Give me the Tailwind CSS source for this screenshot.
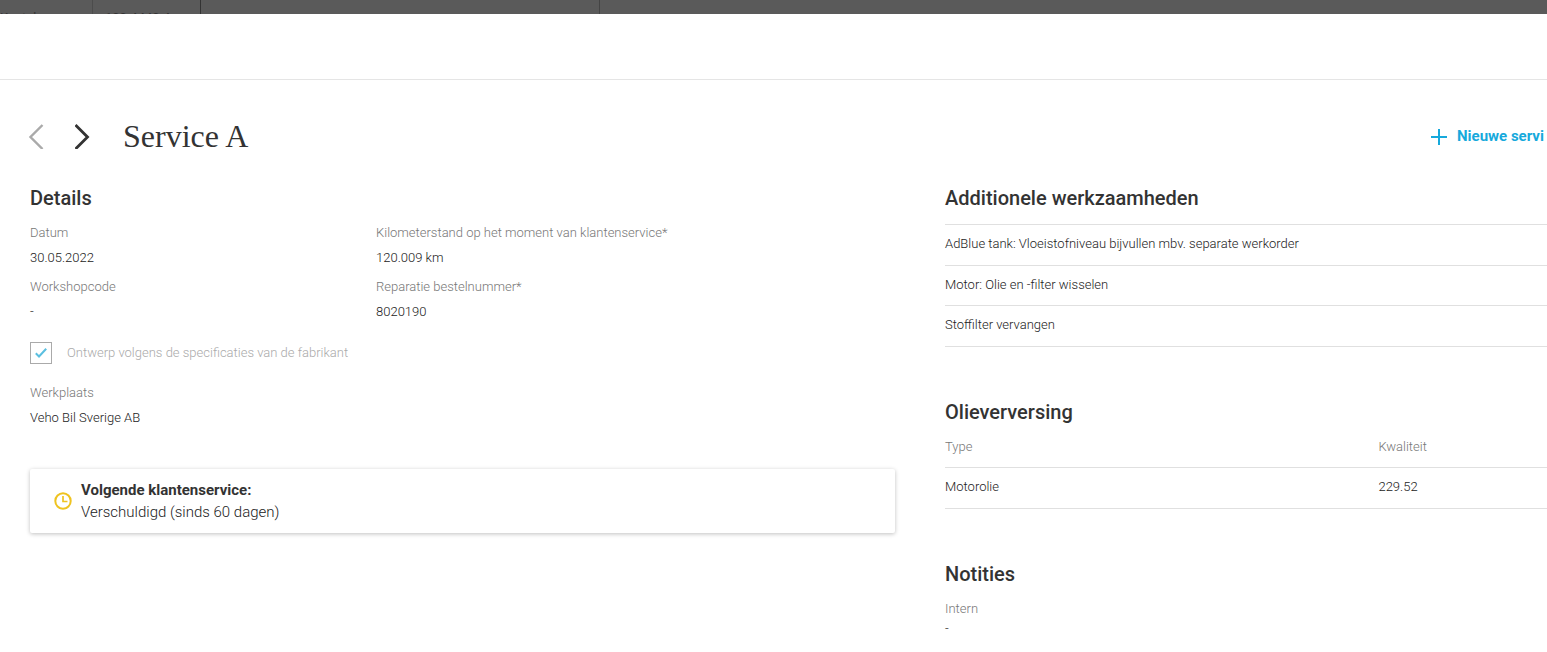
<!DOCTYPE html>
<html lang="nl">
<head>
  <meta charset="UTF-8" />
  <meta name="viewport" content="width=device-width, initial-scale=1.0" />
  <title>Service A</title>
  <script src="https://cdn.jsdelivr.net/npm/@tailwindcss/browser@4"></script>
</head>
<body class="bg-white min-h-screen overflow-x-hidden font-['Roboto',sans-serif] font-light text-[13px] leading-[25px] text-[#222]">
  <!-- Dimmed page behind the dialog -->
  <div class="h-[14px] overflow-hidden flex bg-[#5a5a5a] font-normal text-[#333] leading-5" aria-hidden="true">
    <div class="w-[93px] shrink-0 pt-2 border-r border-[#4c4c4c]">Kenteken</div>
    <div class="w-[108px] shrink-0 pt-2 pl-3 border-r border-[#333]">100.4440.4</div>
    <div class="w-[399px] shrink-0 border-r border-[#444]"></div>
  </div>

  <header class="h-[66px] border-b border-[#e5e5e5]"></header>

  <main class="pl-[30px] pt-8">
    <!-- Title row -->
    <div class="h-12 flex items-center justify-between">
      <div class="flex items-center">
        <button type="button" disabled aria-label="Vorige" class="w-[45px]">
          <svg class="w-4 h-[26px] -ml-0.5" viewBox="0 0 16 26" fill="none" stroke="#aaa" stroke-width="2.4"><path d="M14.5 2 2.5 14l12 12" /></svg>
        </button>
        <button type="button" aria-label="Volgende" class="w-12">
          <svg class="w-4 h-[26px]" viewBox="0 0 16 26" fill="none" stroke="#333" stroke-width="2.8"><path d="M.5 2l12 12-12 12" /></svg>
        </button>
        <h1 class="font-['Liberation_Serif',serif] font-normal text-[32px] leading-10 text-[#333]">Service A</h1>
      </div>
      <button type="button" class="w-[116px] flex items-center gap-[10px] overflow-hidden whitespace-nowrap font-bold text-[15px] text-[#16a9dc]">
        <svg class="w-4 h-[18px] shrink-0" viewBox="0 0 16 18" fill="none" stroke="currentColor" stroke-width="2"><path d="M8 2v16M0 10h16" /></svg>
        Nieuwe servi
      </button>
    </div>

    <div class="mt-6 grid grid-cols-[865fr_602fr] gap-x-[50px]">
      <!-- Left column -->
      <section>
        <h2 class="mb-2 text-xl leading-7 font-medium text-[#333]">Details</h2>
        <dl class="grid grid-cols-[2fr_3fr] gap-y-1">
          <div>
            <dt class="text-[#777]">Datum</dt>
            <dd>30.05.2022</dd>
          </div>
          <div>
            <dt class="text-[#777]">Kilometerstand op het moment van klantenservice*</dt>
            <dd>120.009 km</dd>
          </div>
          <div>
            <dt class="text-[#777]">Workshopcode</dt>
            <dd>-</dd>
          </div>
          <div>
            <dt class="text-[#777]">Reparatie bestelnummer*</dt>
            <dd>8020190</dd>
          </div>
        </dl>

        <div class="mt-4 h-[22px] grid grid-cols-[22px_1fr] items-center">
          <input id="spec" type="checkbox" checked disabled class="peer appearance-none col-start-1 row-start-1 size-[22px] border border-[#aaa]" />
          <svg class="invisible peer-checked:visible col-start-1 row-start-1 justify-self-center size-3 pointer-events-none" viewBox="0 0 12 12" fill="none" stroke="#5bbfe0" stroke-width="2"><path d="M.8 6.3 4 9.5 11.2 1.8" /></svg>
          <label for="spec" class="pl-[15px] text-[#aaa]">Ontwerp volgens de specificaties van de fabrikant</label>
        </div>

        <dl class="mt-[18px]">
          <dt class="text-[#777]">Werkplaats</dt>
          <dd>Veho Bil Sverige AB</dd>
        </dl>

        <div class="mt-[39px] h-16 pl-6 flex items-center gap-[9px] rounded-xs shadow-[0_1px_4px_rgba(0,0,0,0.25)]">
          <svg class="size-[18px] shrink-0" viewBox="0 0 18 18" fill="none" stroke="#efc320" stroke-width="2"><circle cx="9" cy="9" r="7.7" /><path d="M9 4v5.5h4.5" stroke-width="1.7" /></svg>
          <p class="text-[15px] leading-[22px]"><strong class="block font-bold text-[#333]">Volgende klantenservice:</strong>Verschuldigd (sinds 60 dagen)</p>
        </div>
      </section>

      <!-- Right column -->
      <div>
        <section>
          <h2 class="mb-3 text-xl leading-7 font-medium text-[#333]">Additionele werkzaamheden</h2>
          <ul class="border-t border-[#e0e0e0]">
            <li class="h-[41px] pt-1.5 border-b border-[#e0e0e0]">AdBlue tank: Vloeistofniveau bijvullen mbv. separate werkorder</li>
            <li class="h-10 pt-1.5 border-b border-[#e0e0e0]">Motor: Olie en -filter wisselen</li>
            <li class="h-[41px] pt-1.5 border-b border-[#e0e0e0]">Stoffilter vervangen</li>
          </ul>
        </section>

        <section class="mt-[51px]">
          <h2 class="mb-2 text-xl leading-7 font-medium text-[#333]">Olieverversing</h2>
          <table class="w-full table-fixed text-left">
            <thead>
              <tr class="h-[33px] border-b border-[#e0e0e0] text-[#777] align-top">
                <th class="w-[72%] font-light">Type</th>
                <th class="font-light">Kwaliteit</th>
              </tr>
            </thead>
            <tbody>
              <tr class="h-[41px] border-b border-[#e0e0e0] align-top">
                <td class="pt-1.5">Motorolie</td>
                <td class="pt-1.5">229.52</td>
              </tr>
            </tbody>
          </table>
        </section>

        <section class="mt-[51px]">
          <h2 class="mb-2 text-xl leading-7 font-medium text-[#333]">Notities</h2>
          <dl>
            <dt class="text-[#777]">Intern</dt>
            <dd class="leading-4">-</dd>
          </dl>
        </section>
      </div>
    </div>
  </main>
</body>
</html>
